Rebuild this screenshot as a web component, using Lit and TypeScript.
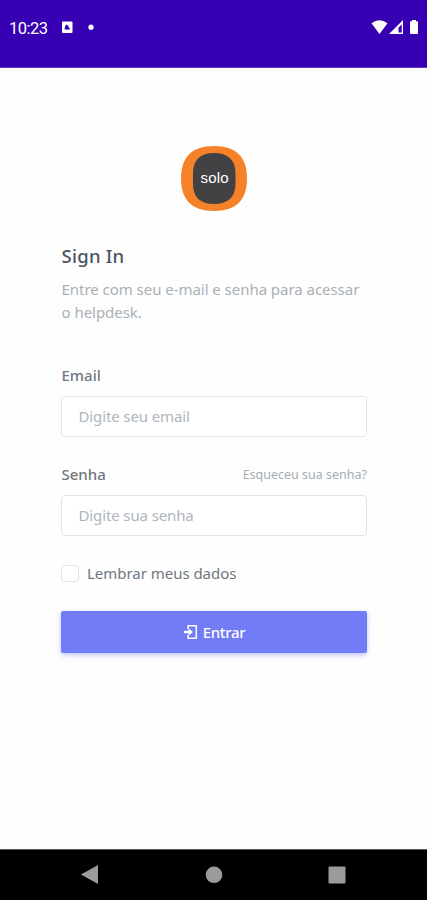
import { LitElement, html, css } from "lit";
import { customElement } from "lit/decorators.js";

@customElement("app-root")
export class AppRoot extends LitElement {
  static styles = css`
    :host { display: flex; flex-direction: column; height: 900px; width: 427px; overflow: hidden; background: #fefefe; font-family: "Noto Sans", sans-serif; font-size: 15px; color: #6c757d; }
    * { box-sizing: border-box; }
    svg { display: block; flex: none; }
    .status { height: 68px; flex: none; background: #3700b3; border-bottom: 1px solid #5b3bc4; padding: 17px 6px 0 9px; display: flex; align-items: flex-start; color: #fff; }
    .time { font: 16.5px/22px Roboto, sans-serif; letter-spacing: -0.5px; width: 52px; padding-top: 0.5px; }
    .spacer { flex: 1; }
    .main { flex: 1; padding: 78px 60px 0 61px; display: flex; flex-direction: column; }
    .logo { align-self: center; margin-right: 1px; }
    .logo text { font-family: "Liberation Sans", sans-serif; font-size: 15px; fill: #fff; }
    h1 { margin: 32px 0 0; font-size: 18.5px; line-height: 24px; font-weight: 500; letter-spacing: 0.25px; color: #4b5460; }
    h1, p, .row label { padding-left: 0.5px; }
    p { margin: 10px 0 0; line-height: 23px; color: #a9b0b6; white-space: nowrap; letter-spacing: -0.04px; }
    .row { display: flex; justify-content: space-between; align-items: center; height: 20px; }
    .email { margin-top: 41px; }
    .pass { margin-top: 27px; }
    label { font-weight: 500; color: #70777d; }
    .remember label { font-weight: 400; letter-spacing: -0.03px; }
    .forgot { font-size: 12.5px; color: #a5adb3; }
    .input { margin-top: 11px; height: 41px; border: 1px solid #dfe3e6; border-radius: 4px; padding: 0 17px 2px 16.5px; display: flex; align-items: center; color: #adb5bd; background: #fff; letter-spacing: -0.12px; }
    .remember { margin-top: 27px; display: flex; align-items: center; height: 20px; gap: 8px; }
    .check { width: 18px; height: 17px; border: 1px solid #dfe3e6; border-radius: 4px; background: #fff; }
    .button { margin-top: 28px; height: 42px; background: #727cf5; border-radius: 2px; box-shadow: 0 2px 5px rgba(114,124,245,.45); color: #fff; display: flex; align-items: center; justify-content: center; gap: 5px; padding-left: 1px; font-weight: 500; letter-spacing: -0.3px; }
    .nav { height: 51px; flex: none; background: #000; border-top: 1px solid #555; }
  `;

  render() {
    return html`
      <div class="status">
        <span class="time">10:23</span>
        <svg width="40" height="22" viewBox="0 0 40 22"><rect x="1" y="4.500" width="10.500" height="11.500" rx="1" fill="#fff"/><path d="M3.700 12.500V11L5 7.500l2 1 1 2.500 1 .5v1z" fill="#3700b3"/><circle cx="30" cy="10.200" r="2.600" fill="#fff"/></svg>
        <span class="spacer"></span>
        <svg width="51" height="22" viewBox="0 0 51 22"><g fill="#fff"><path d="M1.500 6.300Q9.500 0 17.500 6.300L9.500 17z"/><path fill-rule="evenodd" d="M33 3v14H19zM31.700 7.300L28.500 10.700v4.800h3.200z"/><path d="M29.400 11.500l1.500-1.500v5h-1.500z" fill="#3700b3"/><path d="M42 3h4v1.200h1q1 0 1 1V16q0 1-1 1h-6q-1 0-1-1V5.200q0-1 1-1h1z"/></g></svg>
      </div>
      <div class="main">
        <svg class="logo" width="66" height="66" viewBox="0 0 66 66"><path d="M33 0C55 0 66 11 66 32.500S55 65 33 65 0 54 0 32.500 11 0 33 0z" fill="#f58229"/><path d="M33 7C47 7 54.500 14 54.500 27v11C54.500 51 47 58 33 58S12 51 12 38V27C12 14 19 7 33 7z" fill="#424244"/><text x="33.500" y="37" text-anchor="middle" textLength="28">solo</text></svg>
        <h1>Sign In</h1>
        <p>Entre com seu e-mail e senha para acessar<br>o helpdesk.</p>
        <div class="row email"><label>Email</label></div>
        <div class="input">Digite seu email</div>
        <div class="row pass"><label>Senha</label><span class="forgot">Esqueceu sua senha?</span></div>
        <div class="input">Digite sua senha</div>
        <div class="remember"><span class="check"></span><label>Lembrar meus dados</label></div>
        <div class="button"><svg width="14" height="16" viewBox="0 0 14 16"><path d="M4 5V1.800h8.300v12.400H4V11" fill="none" stroke="#fff" stroke-width="1.500" stroke-linejoin="round"/><path d="M0 6.700h4.500V4.200L9 8l-4.500 3.800V9.300H0z" fill="#fff"/></svg><span>Entrar</span></div>
      </div>
      <div class="nav"><svg width="427" height="50" viewBox="0 0 427 50"><g fill="#9b9b9b"><path d="M81 24.500L98 15v19z"/><circle cx="214" cy="24.800" r="8.300"/><rect x="328.500" y="16.500" width="17" height="17" rx="1"/></g></svg></div>
    `;
  }
}
